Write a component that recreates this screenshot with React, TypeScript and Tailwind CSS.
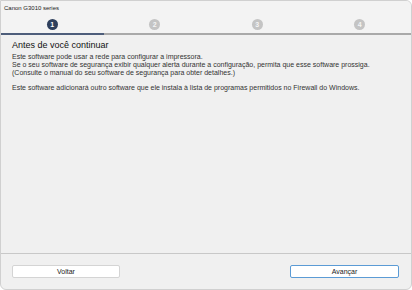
const steps = [1, 2, 3, 4];

function StepBar({ current }: { current: number }) {
  return (
    <div className="grid grid-cols-4">
      {steps.map((n) => (
        <div key={n} className="flex flex-col items-center">
          <div className="flex h-[21px] items-center pt-[3px]">
            <span
              className={
                n === current
                  ? "flex h-[11px] w-[11px] items-center justify-center rounded-full bg-[#2e3f5c] text-[7px] font-bold leading-none text-white"
                  : "flex h-[11px] w-[11px] items-center justify-center rounded-full bg-[#c4c4c4] text-[7px] font-bold leading-none text-[#f4f4f4]"
              }
            >
              {n}
            </span>
          </div>
          <div
            className={
              n === current
                ? "h-[2px] w-full bg-[#4d5d7a]"
                : "h-[2px] w-full bg-[#a9a9a9]"
            }
          />
        </div>
      ))}
    </div>
  );
}

export default function App() {
  return (
    <div className="flex h-[290px] w-[412px] flex-col overflow-hidden rounded-b-[6px] rounded-tr-[6px] border border-[#d0d0d0] bg-[#f0f0f0] font-['Liberation_Sans',Arial,sans-serif] text-[#1a1a1a]">
      <div className="bg-[#f3f3f3]">
        <p className="px-[3px] pt-[3px] text-[6px] leading-[8px] text-[#222]">
          Canon G3010 series
        </p>
        <StepBar current={1} />
      </div>

      <div className="flex-1 px-[11px] pt-[4px]">
        <h1 className="text-[9px] leading-[12px] text-[#111]">
          Antes de você continuar
        </h1>
        <div className="mt-[2px] text-[7px] leading-[7.8px] text-[#333]">
          <p>Este software pode usar a rede para configurar a impressora.</p>
          <p>
            Se o seu software de segurança exibir qualquer alerta durante a
            configuração, permita que esse software prossiga.
          </p>
          <p>(Consulte o manual do seu software de segurança para obter detalhes.)</p>
          <p className="mt-[8px]">
            Este software adicionará outro software que ele instala à lista de
            programas permitidos no Firewall do Windows.
          </p>
        </div>
      </div>

      <div className="h-px bg-[#c8c8c8]" />
      <div className="flex items-center justify-between pb-[11px] pl-[11px] pr-[12px] pt-[11px]">
        <button className="h-[13px] w-[108px] rounded-[2px] border border-[#d4d4d4] bg-white text-[7px] leading-none text-[#222]">
          Voltar
        </button>
        <button className="h-[13px] w-[109px] rounded-[2px] border border-[#5b9bd5] bg-white text-[7px] leading-none text-[#222]">
          Avançar
        </button>
      </div>
    </div>
  );
}
